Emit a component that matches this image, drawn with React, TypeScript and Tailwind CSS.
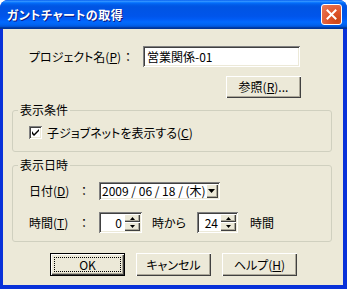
import React from "react";

const font = "font-['Noto_Sans_CJK_JP','Noto_Sans',sans-serif] [font-feature-settings:'palt']";
const raised =
  "bg-[#ECE9D8] shadow-[inset_1px_1px_0_#ffffff,inset_-1px_-1px_0_#404040,inset_-2px_-2px_0_#ACA899]";
const sunken =
  "bg-white shadow-[inset_1px_1px_0_#808080,inset_-1px_-1px_0_#ffffff,inset_2px_2px_0_#404040,inset_-2px_-2px_0_#ECE9D8]";

function Btn({ children, def = false }: { children: React.ReactNode; def?: boolean }) {
  if (def) {
    return (
      <div className="w-[75px] h-[23px] border border-black flex">
        <div className={`flex-1 flex items-center justify-center ${raised} p-[3px]`}>
          <div className="w-full h-full border border-dotted border-black flex items-center justify-center leading-none">
            {children}
          </div>
        </div>
      </div>
    );
  }
  return (
    <div className={`w-[75px] h-[23px] flex items-center justify-center leading-none ${raised}`}>
      {children}
    </div>
  );
}

function Spin({ value, w }: { value: string; w: number }) {
  return (
    <div className={`h-[21px] flex p-[2px] ${sunken}`} style={{ width: w }}>
      <div className="flex-1 flex items-center justify-end pr-[2px] leading-none">{value}</div>
      <div className="w-[16px] flex flex-col">
        <div className={`h-[8px] flex items-center justify-center ${raised}`}>
          <svg width="5" height="3" viewBox="0 0 5 3"><path d="M2.5 0 L5 3 L0 3 Z" fill="#000" /></svg>
        </div>
        <div className={`h-[9px] flex items-center justify-center ${raised}`}>
          <svg width="5" height="3" viewBox="0 0 5 3"><path d="M0 0 L5 0 L2.5 3 Z" fill="#000" /></svg>
        </div>
      </div>
    </div>
  );
}

export default function App() {
  return (
    <div className={`w-[347px] h-[289px] ${font} text-[12px] text-black`}>
      <div className="w-full h-full rounded-t-[8px] overflow-hidden flex flex-col bg-[#0831D9]">
        {/* title bar */}
        <div className="h-[29px] shrink-0 flex items-center pl-[7px] pr-[5px] bg-[linear-gradient(to_bottom,#0058EE_0%,#3593FF_4%,#288EFF_6%,#127DFF_8%,#036FFC_10%,#0262EE_14%,#0057E5_20%,#0054E3_24%,#0055EB_56%,#005BF5_66%,#026AFE_76%,#0062EF_86%,#0052D6_92%,#0040AB_94%,#003092_100%)]">
          <div className="flex-1 text-white font-bold text-[12px] tracking-[0.5px] leading-none [text-shadow:1px_1px_0_#0A1883]">
            ガントチャートの取得
          </div>
          <div className="w-[21px] h-[21px] rounded-[3px] border border-white bg-[radial-gradient(circle_at_80%_80%,#CC4615_0%,#E0542B_40%,#E97C5C_100%)] flex items-center justify-center">
            <svg width="11" height="11" viewBox="0 0 11 11">
              <path d="M1.5 1.5 L9.5 9.5 M9.5 1.5 L1.5 9.5" stroke="#fff" strokeWidth="2" strokeLinecap="square" />
            </svg>
          </div>
        </div>
        {/* client */}
        <div className="flex-1 ml-[3px] mr-[4px] mb-[4px] bg-[#ECE9D8] flex flex-col">
          <div className="mt-[17px] pl-[26px] flex items-center h-[21px]">
            <span className="w-[96px]">
              プロジェクト名(<span className="underline">P</span>)
            </span>
            <span className="w-[18px]">：</span>
            <div className={`w-[157px] h-[21px] ${sunken} flex items-center pl-[4px] leading-none`}>営業関係-01</div>
          </div>
          <div className="mt-[9px] ml-[223px]">
            <div className={`w-[75px] h-[22px] flex items-center justify-center leading-none ${raised}`}>
              参照(<span className="underline">R</span>)...
            </div>
          </div>

          <fieldset className="mt-[5px] ml-[9px] w-[320px] border border-[#D0D0BF] rounded-[3px] px-0 pb-[12px]">
            <legend className="ml-[5px] px-[2px] leading-[14px]">表示条件</legend>
            <div className="mt-[9px] pl-[16px] flex items-center gap-[5px] h-[13px]">
              <div className={`w-[13px] h-[13px] ${sunken} flex items-center justify-center`}>
                <svg width="7" height="7" viewBox="0 0 7 7">
                  <path d="M0 2 L0 5 L2 7 L7 2 L7 0 L2 5 Z" fill="#000" />
                </svg>
              </div>
              <span className="leading-none">
                子ジョブネットを表示する(<span className="underline">C</span>)
              </span>
            </div>
          </fieldset>

          <fieldset className="mt-[6px] ml-[9px] w-[320px] border border-[#D0D0BF] rounded-[3px] px-0 pb-[8px]">
            <legend className="ml-[5px] px-[2px] leading-[14px]">表示日時</legend>
            <div className="mt-[10px] pl-[16px] flex items-center h-[18px]">
              <span className="w-[52px]">
                日付(<span className="underline">D</span>)
              </span>
              <span className="w-[18px]">：</span>
              <div className={`w-[121px] h-[18px] ${sunken} flex p-[2px]`}>
                <div className="flex-1 flex items-center pl-[1px] leading-none whitespace-pre">2009 / 06 / 18 / (木)</div>
                <div className={`w-[16px] flex items-center justify-center ${raised}`}>
                  <svg width="7" height="4" viewBox="0 0 7 4"><path d="M0 0 L7 0 L3.5 4 Z" fill="#000" /></svg>
                </div>
              </div>
            </div>
            <div className="mt-[12px] pl-[16px] flex items-center h-[21px]">
              <span className="w-[52px]">
                時間(<span className="underline">T</span>)
              </span>
              <span className="w-[18px]">：</span>
              <Spin value="0" w={43} />
              <span className="ml-[10px] w-[45px]">時から</span>
              <Spin value="24" w={41} />
              <span className="ml-[12px]">時間</span>
            </div>
          </fieldset>

          <div className="mt-[11px] ml-[47px] flex gap-[11px]">
            <Btn def>OK</Btn>
            <Btn>キャンセル</Btn>
            <Btn>
              ヘルプ(<span className="underline">H</span>)
            </Btn>
          </div>
        </div>
      </div>
    </div>
  );
}
